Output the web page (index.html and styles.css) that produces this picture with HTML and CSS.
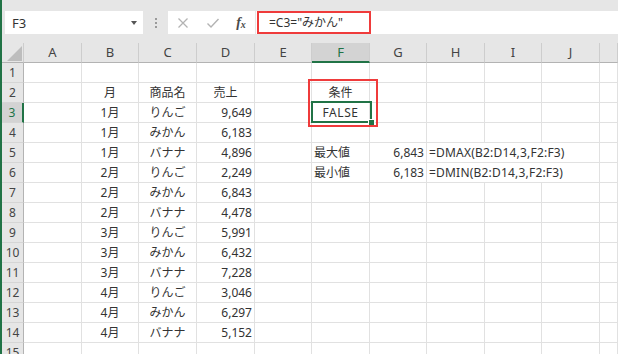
FILE: index.html
```html
<!DOCTYPE html>
<html>
<head>
  <title>DMAX / DMIN</title>
  <link rel="stylesheet" href="styles.css">
</head>
<body>
<div class="app">
  <div class="top">
    <div class="namebox"><span>F3</span><span class="caret"></span></div>
    <div class="grip"><i></i><i></i><i></i></div>
    <div class="btns">
      <span class="btn"><svg width="12" height="12" viewBox="0 0 12 12"><path d="M1.5 1.5L10.5 10.5M10.5 1.5L1.5 10.5" stroke="#b3b3b3" stroke-width="1.3" fill="none"/></svg></span>
      <span class="btn"><svg width="14" height="12" viewBox="0 0 14 12"><path d="M1.5 6.5L5 10L12.5 2" stroke="#b3b3b3" stroke-width="1.4" fill="none"/></svg></span>
      <span class="btn fx">f<small>x</small></span>
    </div>
    <div class="formula"><span class="ftext">=C3="みかん"</span></div>
  </div>

  <div class="sheet">
    <div class="h corner"><svg width="22" height="20" viewBox="0 0 22 20"><polygon points="5,18 20,3 20,18" fill="#bdbdbd"/></svg></div>
    <div class="h">A</div><div class="h">B</div><div class="h">C</div><div class="h">D</div><div class="h">E</div>
    <div class="h cur">F</div><div class="h">G</div><div class="h">H</div><div class="h">I</div><div class="h">J</div><div class="h"></div>

    <div class="n">1</div><div class="c"></div><div class="c"></div><div class="c"></div><div class="c"></div><div class="c"></div><div class="c"></div><div class="c"></div><div class="c"></div><div class="c"></div><div class="c"></div><div class="c"></div>

    <div class="n">2</div><div class="c"></div><div class="c m">月</div><div class="c m">商品名</div><div class="c m">売上</div><div class="c"></div><div class="c m">条件</div><div class="c"></div><div class="c"></div><div class="c"></div><div class="c"></div><div class="c"></div>

    <div class="n cur">3</div><div class="c"></div><div class="c m">1月</div><div class="c m">りんご</div><div class="c r">9,649</div><div class="c"></div><div class="c m bool">FALSE</div><div class="c"></div><div class="c"></div><div class="c"></div><div class="c"></div><div class="c"></div>

    <div class="n">4</div><div class="c"></div><div class="c m">1月</div><div class="c m">みかん</div><div class="c r">6,183</div><div class="c"></div><div class="c"></div><div class="c"></div><div class="c"></div><div class="c"></div><div class="c"></div><div class="c"></div>

    <div class="n">5</div><div class="c"></div><div class="c m">1月</div><div class="c m">バナナ</div><div class="c r">4,896</div><div class="c"></div><div class="c">最大値</div><div class="c r">6,843</div><div class="c wide">=DMAX(B2:D14,3,F2:F3)</div><div class="c"></div>

    <div class="n">6</div><div class="c"></div><div class="c m">2月</div><div class="c m">りんご</div><div class="c r">2,249</div><div class="c"></div><div class="c">最小値</div><div class="c r">6,183</div><div class="c wide">=DMIN(B2:D14,3,F2:F3)</div><div class="c"></div>

    <div class="n">7</div><div class="c"></div><div class="c m">2月</div><div class="c m">みかん</div><div class="c r">6,843</div><div class="c"></div><div class="c"></div><div class="c"></div><div class="c"></div><div class="c"></div><div class="c"></div><div class="c"></div>

    <div class="n">8</div><div class="c"></div><div class="c m">2月</div><div class="c m">バナナ</div><div class="c r">4,478</div><div class="c"></div><div class="c"></div><div class="c"></div><div class="c"></div><div class="c"></div><div class="c"></div><div class="c"></div>

    <div class="n">9</div><div class="c"></div><div class="c m">3月</div><div class="c m">りんご</div><div class="c r">5,991</div><div class="c"></div><div class="c"></div><div class="c"></div><div class="c"></div><div class="c"></div><div class="c"></div><div class="c"></div>

    <div class="n">10</div><div class="c"></div><div class="c m">3月</div><div class="c m">みかん</div><div class="c r">6,432</div><div class="c"></div><div class="c"></div><div class="c"></div><div class="c"></div><div class="c"></div><div class="c"></div><div class="c"></div>

    <div class="n">11</div><div class="c"></div><div class="c m">3月</div><div class="c m">バナナ</div><div class="c r">7,228</div><div class="c"></div><div class="c"></div><div class="c"></div><div class="c"></div><div class="c"></div><div class="c"></div><div class="c"></div>

    <div class="n">12</div><div class="c"></div><div class="c m">4月</div><div class="c m">りんご</div><div class="c r">3,046</div><div class="c"></div><div class="c"></div><div class="c"></div><div class="c"></div><div class="c"></div><div class="c"></div><div class="c"></div>

    <div class="n">13</div><div class="c"></div><div class="c m">4月</div><div class="c m">みかん</div><div class="c r">6,297</div><div class="c"></div><div class="c"></div><div class="c"></div><div class="c"></div><div class="c"></div><div class="c"></div><div class="c"></div>

    <div class="n">14</div><div class="c"></div><div class="c m">4月</div><div class="c m">バナナ</div><div class="c r">5,152</div><div class="c"></div><div class="c"></div><div class="c"></div><div class="c"></div><div class="c"></div><div class="c"></div><div class="c"></div>

    <div class="n">15</div><div class="c"></div><div class="c"></div><div class="c"></div><div class="c"></div><div class="c"></div><div class="c"></div><div class="c"></div><div class="c"></div><div class="c"></div><div class="c"></div><div class="c"></div>

    <div class="sel"><span class="handle"></span></div>
    <div class="mark"></div>
  </div>
</div>
</body>
</html>
```

FILE: styles.css
```css
body { margin: 0; background: #fff; font-family: "Noto Sans", "Noto Sans CJK JP", sans-serif; font-size: 12px; color: #333; }
.app { width: 616px; height: 354px; border-left: 2px solid #217346; overflow: hidden; }

/* formula bar */
.top { height: 43px; box-sizing: border-box; padding-top: 11px; background: #e6e6e6; display: flex; align-items: flex-start; }
.namebox {
  width: 138px; height: 23px; margin-left: 3px; box-sizing: border-box;
  padding: 0 6px 0 7px; background: #fff;
  display: flex; align-items: center; justify-content: space-between;
  font-size: 13px; color: #333;
}
.caret { width: 0; height: 0; border-left: 3.5px solid transparent; border-right: 3.5px solid transparent; border-top: 4px solid #555; }
.grip { width: 25px; height: 23px; display: flex; flex-direction: column; align-items: center; justify-content: center; gap: 2px; }
.grip i { width: 2px; height: 2px; background: #9a9a9a; }
.btns { width: 87px; height: 23px; background: #fff; display: flex; }
.btn { width: 30px; display: flex; align-items: center; justify-content: center; }
.fx { width: 26px; font-family: "Liberation Serif", serif; font-style: italic; font-weight: bold; font-size: 14px; color: #4a4a4a; }
.fx small { font-size: 10px; margin-top: 3px; }
.formula { flex: 1; height: 23px; margin-left: 1px; background: #fff; padding-left: 1px; }
.ftext {
  display: inline-block; width: 114px; height: 23px; box-sizing: border-box;
  border: 2px solid #ef3b3b; padding-left: 10px; line-height: 19px; color: #333;
}

/* sheet grid */
.sheet {
  position: relative;
  display: grid;
  grid-template-columns: 22px 58px 57px 58px 58px 57px 58px 57px 58px 57px 58px 18px;
  grid-template-rows: 20px;
  grid-auto-rows: 20px;
}
.sheet > div { box-sizing: border-box; white-space: nowrap; }
.c { border-right: 1px solid #e1e1e1; border-bottom: 1px solid #e1e1e1; padding: 1px 2px 0; line-height: 18px; }
.m { text-align: center; }
.r { text-align: right; }
.bool { letter-spacing: 0.6px; }
.wide { grid-column: span 3; letter-spacing: 0.2px; }

.h {
  background: #e6e6e6; border-right: 1px solid #cdcdcd; border-bottom: 1px solid #b3b3b3;
  text-align: center; line-height: 19px; font-size: 13px; color: #444;
}
.h.cur { background: #d3d3d3; color: #217346; border-bottom: 2px solid #217346; }
.corner { line-height: 0; }
.n {
  background: #e6e6e6; border-right: 1px solid #b3b3b3; border-bottom: 1px solid #d5d5d5;
  text-align: center; line-height: 20px; font-size: 12px; color: #444;
}
.n.cur { background: #d3d3d3; color: #217346; border-right: 2px solid #217346; }

/* selection and annotation */
.sel { position: absolute; left: 309px; top: 58px; width: 61px; height: 22px; border: 2px solid #217346; }
.handle { position: absolute; right: -5px; bottom: -5px; width: 5px; height: 5px; background: #217346; border: 1px solid #fff; }
.mark { position: absolute; left: 306px; top: 36px; width: 70px; height: 48px; border: 2px solid #ef3b3b; }
```
